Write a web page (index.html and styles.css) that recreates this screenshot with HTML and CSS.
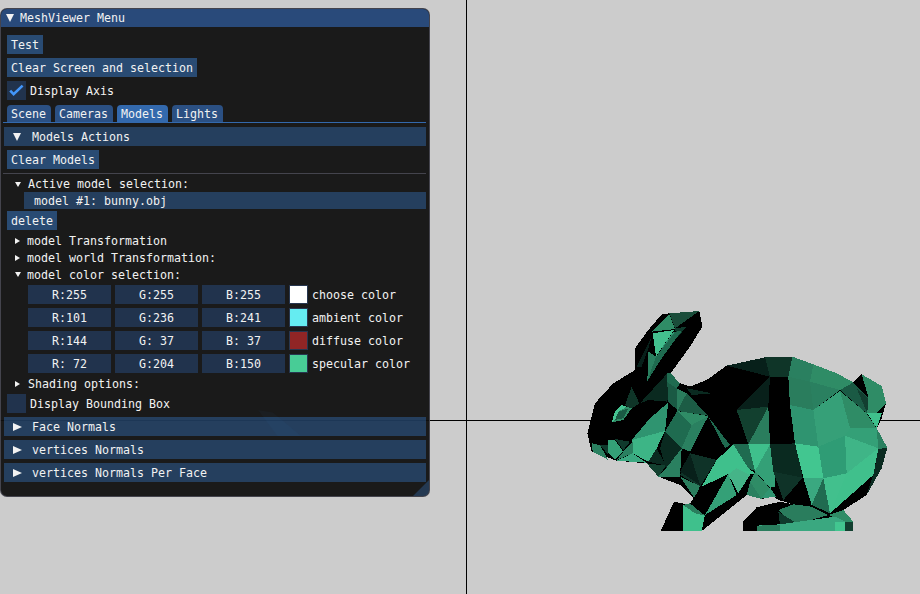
FILE: index.html
```html
<!DOCTYPE html>
<html lang="en">
<head>
<meta charset="utf-8">
<title>MeshViewer</title>
<link rel="stylesheet" href="styles.css">
</head>
<body>
<main class="canvas">
  <div class="axis axis-h"></div>
  <div class="axis axis-v"></div>

  <svg class="bunny" viewBox="0 0 945 690" width="315" height="230" shape-rendering="crispEdges" aria-hidden="true">
    <polygon fill="#000" points="245,28 268,25 358,18 367,65 330,125 272,205 300,235 330,245 380,225 440,182 555,157 637,155 700,178 770,205 820,232 845,208 905,243 918,295 905,340 890,370 922,428 905,490 860,570 790,615 820,650 820,678 490,678 490,650 530,607 600,590 640,598 595,585 580,575 545,582 500,570 365,678 242,678 282,590 330,600 345,582 300,540 235,515 200,475 110,467 35,440 22,385 45,295 100,235 165,195 165,130 205,75"/>
    <!-- ear -->
    <polygon fill="#1a4d3a" points="268,25 358,18 285,70"/>
    <polygon fill="#0f3a2c" points="285,70 320,65 290,100"/>
    <polygon fill="#2f8c66" points="215,80 268,28 285,72"/>
    <polygon fill="#43c08e" points="218,85 282,75 250,122 228,155"/>
    <polygon fill="#2f9470" points="250,122 282,78 280,90 232,155"/>
    <polygon fill="#2a8060" points="205,140 228,155 202,228"/>
    <polygon fill="#1f6b50" points="228,155 285,80 305,78 245,160 202,228"/>
    <polygon fill="#07201a" points="170,185 215,95 205,130 185,185"/>
    <!-- head and neck -->
    <polygon fill="#0f3528" points="135,300 155,245 178,295 150,315"/>
    <polygon fill="#0a2a20" points="180,295 262,205 270,235 262,290 205,285"/>
    <polygon fill="#1f6b50" points="262,205 272,205 300,235 290,250 262,232"/>
    <polygon fill="#1a5a44" points="262,232 290,250 292,315 264,290"/>
    <polygon fill="#2a7d5d" points="290,250 320,265 292,318"/>
    <polygon fill="#1c5c45" points="320,265 385,332 292,318"/>
    <polygon fill="#0a2a20" points="320,250 395,265 335,270"/>
    <polygon fill="#2f9470" points="265,292 255,378 155,405 210,340"/>
    <polygon fill="#3db586" points="155,405 255,378 230,430 205,470 158,445"/>
    <polygon fill="#2f8c66" points="95,352 105,320 125,300 155,310 130,345"/>
    <polygon fill="#45c492" points="95,352 105,320 125,300 140,305 115,320 105,345"/>
    <polygon fill="#1a5a44" points="115,320 145,310 130,340 105,345"/>
    <!-- snout -->
    <polygon fill="#2a8060" points="35,415 60,420 85,465 38,440"/>
    <polygon fill="#0f3a2c" points="60,420 85,420 85,450"/>
    <polygon fill="#34a077" points="85,405 105,405 130,440 105,465 85,445"/>
    <polygon fill="#0f3a2c" points="105,402 150,410 130,435"/>
    <polygon fill="#2a8060" points="130,440 158,412 158,445 110,465"/>
    <polygon fill="#3aa880" points="110,467 158,445 200,473"/>
    <!-- chest -->
    <polygon fill="#1f6b50" points="292,318 335,360 305,430 255,380"/>
    <polygon fill="#2f8c66" points="292,318 385,333 335,360"/>
    <polygon fill="#2a8060" points="335,360 385,333 330,440 305,430"/>
    <polygon fill="#0a2a20" points="255,380 305,430 258,490 240,430"/>
    <polygon fill="#0a2a20" points="230,430 205,470 258,482"/>
    <polygon fill="#12402f" points="200,475 258,482 235,515"/>
    <polygon fill="#2a8060" points="258,490 305,430 300,515 235,515"/>
    <polygon fill="#0f3328" points="330,445 410,465 360,545 300,510"/>
    <polygon fill="#08201a" points="330,445 360,540 300,500"/>
    <polygon fill="#2a7d5d" points="300,515 360,543 345,582"/>
    <polygon fill="#1f6b50" points="385,335 450,420 435,430"/>
    <!-- front leg -->
    <polygon fill="#3fc08c" points="460,418 505,490 525,505 365,545 410,465"/>
    <polygon fill="#45b488" points="470,490 510,510 475,565 445,507"/>
    <polygon fill="#34a077" points="445,507 470,570 375,630"/>
    <polygon fill="#000" points="365,545 445,507 375,630 330,595"/>
    <polygon fill="#1f6b50" points="460,418 505,418 525,498 505,490"/>
    <polygon fill="#3fc08c" points="505,418 570,418 525,498"/>
    <polygon fill="#34a077" points="525,498 570,418 585,490 585,545 570,548"/>
    <polygon fill="#2f8c66" points="510,530 525,500 570,550 545,582"/>
    <polygon fill="#2a8060" points="510,530 545,582 500,570"/>
    <polygon fill="#2f9470" points="545,580 570,548 588,575"/>
    <!-- flank -->
    <polygon fill="#12402f" points="470,315 565,305 505,418"/>
    <polygon fill="#2a7d5d" points="565,305 505,418 570,418"/>
    <polygon fill="#08201a" points="470,315 570,215 565,305"/>
    <polygon fill="#0a2a20" points="570,418 650,415 668,518 580,500"/>
    <polygon fill="#0f3328" points="580,500 668,518 610,585"/>
    <!-- back -->
    <polygon fill="#07201a" points="440,182 555,157 570,215"/>
    <polygon fill="#0f3528" points="555,157 637,155 625,215 570,215"/>
    <polygon fill="#2a8060" points="637,155 700,178 690,230 625,215"/>
    <polygon fill="#2f8c66" points="700,178 770,205 780,255 690,230"/>
    <polygon fill="#2f8c66" points="770,205 820,232 780,255"/>
    <polygon fill="#2a7d5d" points="625,215 690,230 700,315 630,300"/>
    <polygon fill="#2a8060" points="690,230 780,255 700,315"/>
    <polygon fill="#36a078" points="700,315 780,258 810,370 795,392"/>
    <polygon fill="#2f8c66" points="780,258 860,325 890,370 810,370"/>
    <polygon fill="#34a077" points="810,370 890,370 895,430 795,392"/>
    <polygon fill="#2f9470" points="630,300 700,315 715,425 645,415"/>
    <polygon fill="#36a078" points="700,315 795,392 715,425"/>
    <!-- haunch -->
    <polygon fill="#42c690" points="645,415 715,425 730,520 670,518"/>
    <polygon fill="#3aa880" points="670,518 730,520 695,600"/>
    <polygon fill="#206b50" points="695,600 730,520 750,625"/>
    <polygon fill="#2f9c75" points="715,425 795,392 800,505 730,520"/>
    <polygon fill="#3fb587" points="795,392 895,430 800,505"/>
    <polygon fill="#42c08d" points="730,520 800,505 750,625"/>
    <polygon fill="#40c08c" points="800,505 895,430 880,510 750,625"/>
    <polygon fill="#2a8060" points="890,370 922,428 895,432"/>
    <polygon fill="#0a2a20" points="895,432 922,428 905,490 860,570 880,510"/>
    <!-- tail -->
    <polygon fill="#2f8c66" points="845,208 905,243 865,275"/>
    <polygon fill="#1a5a44" points="780,255 820,232 865,280 860,325"/>
    <polygon fill="#000" points="820,232 845,208 865,275"/>
    <polygon fill="#123f30" points="830,250 865,280 862,325"/>
    <polygon fill="#2f8c66" points="865,275 905,243 918,295 888,325 862,325"/>
    <polygon fill="#3fc08c" points="862,325 905,325 890,370"/>
    <!-- back foot -->
    <polygon fill="#2a7d5d" points="595,615 640,598 695,605 745,630 640,660"/>
    <polygon fill="#0f3a2c" points="595,620 650,655 600,660"/>
    <polygon fill="#2f8c66" points="745,630 790,615 820,650 795,650"/>
    <polygon fill="#3aa880" points="530,662 600,658 765,635 795,650 795,678 530,678"/>
    <polygon fill="#42c690" points="765,650 795,650 795,678 765,678"/>
    <polygon fill="#123f30" points="795,650 820,650 820,678 795,678"/>
    <polygon fill="#2a7d5d" points="530,662 600,660 600,678 530,678"/>
    <!-- front foot -->
    <polygon fill="#3fc08c" points="310,600 345,625 375,630 365,678 310,678"/>
    <polygon fill="#2a7d5d" points="310,600 330,595 375,632 345,625"/>
  </svg>

  <section class="window">
    <header class="title">
      <span class="tri tri-down tri-title"></span>
      <span>MeshViewer Menu</span>
    </header>
    <div class="body">
      <button class="btn">Test</button>
      <button class="btn">Clear Screen and selection</button>
      <div class="check-row">
        <span class="check">
          <svg viewBox="0 0 19 19" width="19" height="19"><path class="check-mark" d="M3.2 9.7 6.6 13.2 15.6 4.6"/></svg>
        </span>
        <span>Display Axis</span>
      </div>
      <nav class="tabs">
        <span class="tab">Scene</span>
        <span class="tab">Cameras</span>
        <span class="tab tab-active">Models</span>
        <span class="tab">Lights</span>
      </nav>
      <div class="header"><span class="tri tri-down tri-header"></span><span>Models Actions</span></div>
      <button class="btn">Clear Models</button>
      <hr class="sep">
      <div class="active-group">
        <div class="tree tree-first"><span class="tri tri-down tri-tree"></span><span class="tree-label-a">Active model selection:</span></div>
        <div class="selectable">model #1: bunny.obj</div>
      </div>
      <button class="btn">delete</button>
      <div class="tree"><span class="tri tri-right tri-tree-r"></span><span>model Transformation</span></div>
      <div class="tree"><span class="tri tri-right tri-tree-r"></span><span>model world Transformation:</span></div>
      <div class="tree"><span class="tri tri-down tri-tree"></span><span>model color selection:</span></div>
      <div class="color-row">
        <span class="field">R:255</span><span class="field">G:255</span><span class="field">B:255</span>
        <span class="swatch swatch-white"></span><span>choose color</span>
      </div>
      <div class="color-row">
        <span class="field">R:101</span><span class="field">G:236</span><span class="field">B:241</span>
        <span class="swatch swatch-ambient"></span><span>ambient color</span>
      </div>
      <div class="color-row">
        <span class="field">R:144</span><span class="field">G: 37</span><span class="field">B: 37</span>
        <span class="swatch swatch-diffuse"></span><span>diffuse color</span>
      </div>
      <div class="color-row">
        <span class="field">R: 72</span><span class="field">G:204</span><span class="field">B:150</span>
        <span class="swatch swatch-specular"></span><span>specular color</span>
      </div>
      <div class="tree"><span class="tri tri-right tri-tree-r"></span><span class="tree-label-a">Shading options:</span></div>
      <div class="check-row"><span class="check"></span><span>Display Bounding Box</span></div>
      <div class="header"><span class="tri tri-right tri-header-r"></span><span>Face Normals</span></div>
      <div class="header"><span class="tri tri-right tri-header-r"></span><span>vertices Normals</span></div>
      <div class="header"><span class="tri tri-right tri-header-r"></span><span>vertices Normals Per Face</span></div>
    </div>
    <div class="wedge"></div>
    <div class="grip"></div>
  </section>
</main>
</body>
</html>
```
FILE: styles.css
```css
* { box-sizing: border-box; }

html, body { margin: 0; padding: 0; }

body {
  width: 920px;
  height: 594px;
  overflow: hidden;
  font-family: "DejaVu Sans Mono", "Liberation Mono", monospace;
  font-size: 11.63px;
  color: #f2f2f2;
}

.canvas {
  position: relative;
  width: 920px;
  height: 594px;
  overflow: hidden;
  background: #cccccc;
}

.axis { position: absolute; background: #000; }
.axis-h { left: 0; right: 0; top: 420px; height: 1px; }
.axis-v { top: 0; bottom: 0; left: 466px; width: 1px; }

.bunny { position: absolute; left: 580px; top: 305px; display: block; }

.window {
  position: absolute;
  left: 0;
  top: 8px;
  width: 430px;
  border: 1px solid rgba(110, 110, 128, 0.5);
  border-radius: 7px;
  overflow: hidden;
  background: rgba(15, 15, 15, 0.94);
}

.title {
  display: flex;
  align-items: center;
  height: 18px;
  padding-left: 19px;
  background: #294a7a;
}

.body {
  display: flex;
  flex-direction: column;
  align-items: flex-start;
  gap: 4px;
  padding: 8px 3px 14px 3px;
}

.btn {
  display: block;
  height: 19px;
  margin: 0 0 0 3px;
  padding: 0 4px;
  border: 0;
  font: inherit;
  color: inherit;
  white-space: pre;
  background: rgba(66, 150, 250, 0.4);
}

.check-row {
  display: flex;
  align-items: center;
  gap: 4px;
  height: 19px;
  margin-left: 3px;
}

.check {
  display: block;
  width: 19px;
  height: 19px;
  background: rgba(41, 74, 122, 0.54);
}

.check svg { display: block; }

.check-mark {
  fill: none;
  stroke: #4296fa;
  stroke-width: 2.6;
}

.tabs {
  display: flex;
  align-items: flex-end;
  gap: 4px;
  align-self: stretch;
  height: 19px;
  margin-left: -1px;
  padding-left: 4px;
  border-bottom: 1px solid #3369ad;
}

.tab {
  display: flex;
  align-items: center;
  height: 17px;
  padding: 0 5px 0 4px;
  border-radius: 4px 4px 0 0;
  background: #2b5083;
}

.tab-active { background: #3369ad; }

.header {
  display: flex;
  align-items: center;
  align-self: stretch;
  height: 19px;
  padding-left: 28px;
  background: rgba(66, 150, 250, 0.31);
}

.sep {
  align-self: stretch;
  height: 1px;
  margin: 0 0 0 -1px;
  border: 0;
  background: rgba(110, 110, 128, 0.5);
}

.active-group {
  display: flex;
  flex-direction: column;
  align-self: stretch;
  gap: 2px;
  margin-bottom: -2px;
}

.tree {
  display: flex;
  align-items: center;
  height: 13px;
  padding-left: 23px;
}

.tree-first { height: 12px; }

.tree-label-a { margin-left: 1px; }

.selectable {
  display: flex;
  align-items: center;
  height: 17px;
  margin-left: 20px;
  padding-left: 10px;
  background: rgba(66, 150, 250, 0.31);
}

.color-row {
  display: flex;
  align-items: center;
  gap: 4px;
  height: 19px;
  margin-left: 24px;
}

.field {
  display: flex;
  align-items: center;
  justify-content: center;
  width: 83px;
  height: 19px;
  white-space: pre;
  background: rgba(41, 74, 122, 0.54);
}

.swatch {
  display: block;
  width: 19px;
  height: 19px;
  border: 1px solid #27364f;
}

.swatch-white { background: #ffffff; }
.swatch-ambient { background: #65ecf1; }
.swatch-diffuse { background: #902525; }
.swatch-specular { background: #48cc96; }

.tri {
  position: absolute;
  width: 0;
  height: 0;
  border-style: solid;
  border-color: transparent;
}

.tri-down { border-top-color: #f2f2f2; }
.tri-right { border-left-color: #f2f2f2; }

.tri-title { left: 5px; top: 5px; border-width: 8px 4px 0 4px; }
.tri-header { margin-left: -19px; border-width: 8px 4.5px 0 4.5px; }
.tri-header-r { margin-left: -19px; border-width: 4px 0 4px 9px; }
.tri-tree { margin-left: -12px; border-width: 5px 3px 0 3px; }
.tri-tree-r { margin-left: -12px; border-width: 3px 0 3px 5px; }

.wedge {
  position: absolute;
  left: 257px;
  top: 401px;
  width: 43px;
  height: 26px;
  clip-path: polygon(0 0, 35% 10%, 100% 100%, 45% 100%);
  background: rgba(66, 150, 250, 0.03);
}

.grip {
  position: absolute;
  right: 0;
  bottom: 0;
  width: 16px;
  height: 16px;
  clip-path: polygon(100% 0, 100% 100%, 0 100%);
  background: rgba(66, 150, 250, 0.25);
}
```
